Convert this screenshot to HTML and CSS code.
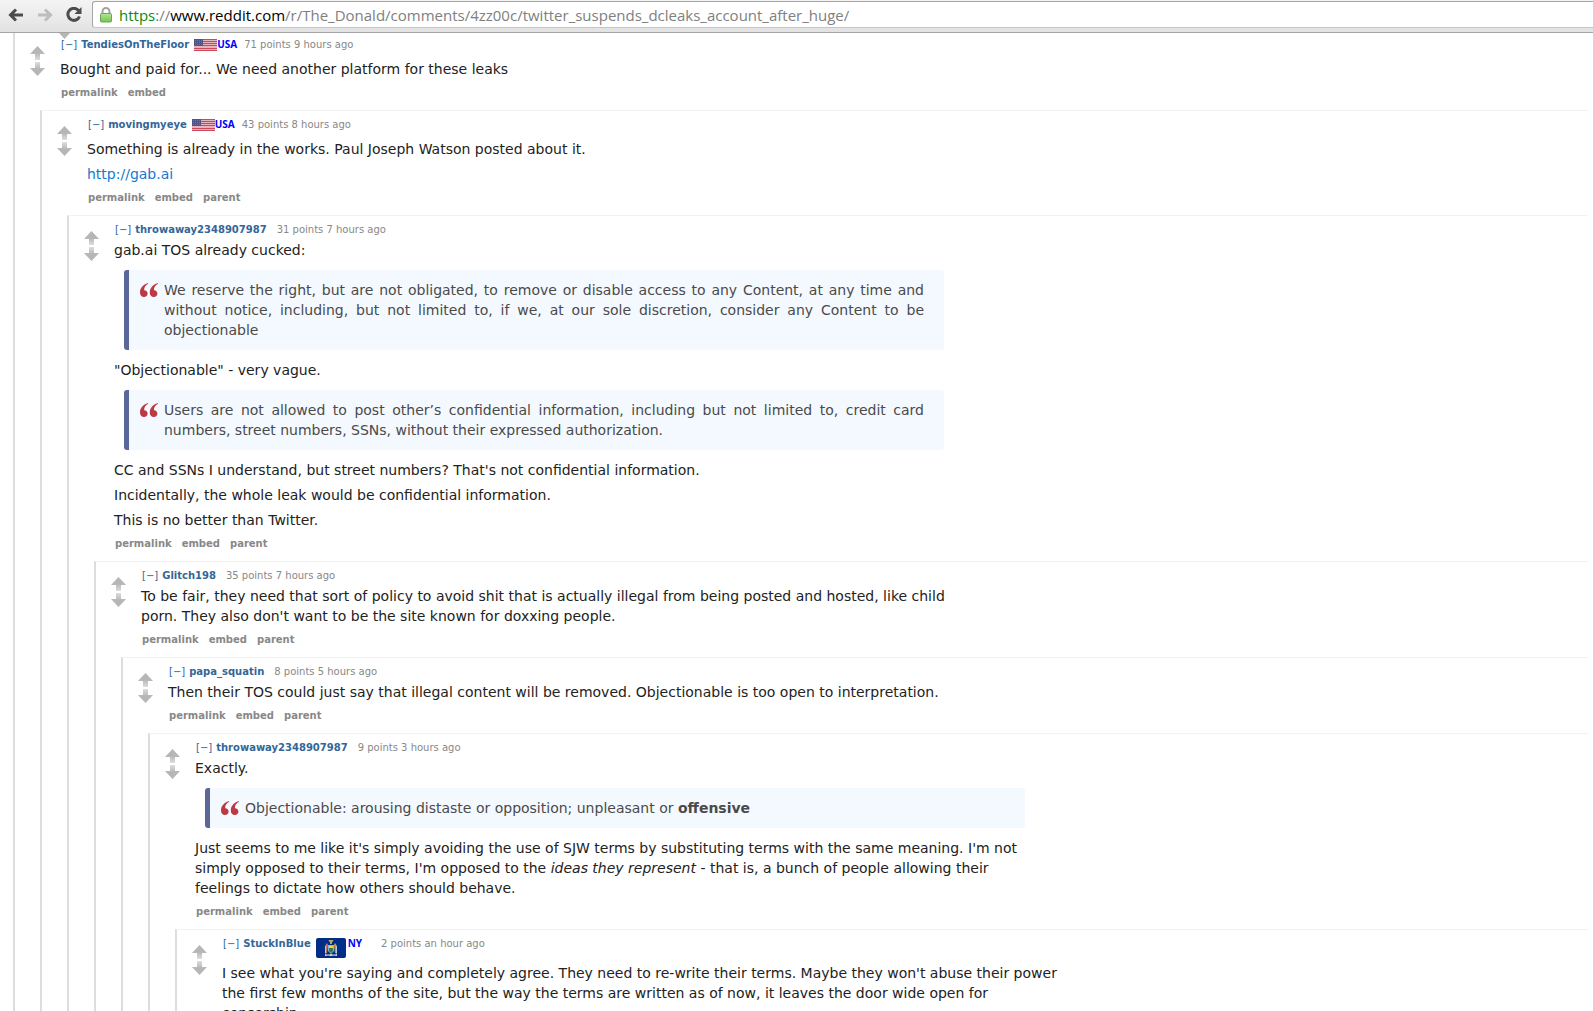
FILE: index.html
```html
<!DOCTYPE html>
<html lang="en">
<head>
<meta charset="utf-8">
<title>Twitter suspends DCLeaks account : The_Donald</title>
<link rel="stylesheet" href="styles.css">
</head>
<body>
<svg class="defs" aria-hidden="true">
  <defs>
    <linearGradient id="stem" x1="0" y1="0" x2="0" y2="1"><stop offset="0.5" stop-color="#b6b6b6"/><stop offset="1" stop-color="#dedede"/></linearGradient>
    <linearGradient id="lock" x1="0" y1="0" x2="0" y2="1"><stop offset="0" stop-color="#b4e594"/><stop offset="1" stop-color="#72c653"/></linearGradient>
    <symbol id="up" viewBox="0 0 15 14"><path d="M7.500 0L15 8H10V14H5V8H0Z" fill="url(#stem)"/></symbol>
    <symbol id="quote" viewBox="0 0 18 14"><path d="M8 0C3 1.500 0 5 0 9.500C0 12.300 1.600 14 4 14C6.200 14 7.600 12.500 7.600 10.500C7.600 8.500 6.200 7.200 4.200 7.200C3.900 4.500 5.500 2 8.200.7ZM17.800 0C12.800 1.500 9.800 5 9.800 9.500C9.800 12.300 11.400 14 13.800 14C16 14 17.400 12.500 17.400 10.500C17.400 8.500 16 7.200 14 7.200C13.700 4.500 15.300 2 18 .7Z" fill="#bc3a43"/></symbol>
    <symbol id="usa" viewBox="0 0 23 12"><path fill="#e6b4ba" d="M0 0h23v12H0z"/><path d="M0 .5h23M0 2.500h23M0 4.500h23M0 6.500h23M0 9.500h23M0 11.500h23" stroke="#c9485a"/><path fill="#50538a" d="M0 0h9v7H0z"/><path d="M1 1.500h8M1 3.500h8M1 5.500h8" stroke="#70739f" stroke-dasharray="1 1"/></symbol>
  </defs>
</svg>
<header class="toolbar">
  <button class="nav" aria-label="Back"><svg width="16" height="14" viewBox="0 0 16 14" fill="none" stroke="#4c4c4c" stroke-width="3"><path d="M15 7H3M8 1.500L2.500 7L8 12.500"/></svg></button>
  <button class="nav" aria-label="Forward"><svg width="16" height="14" viewBox="0 0 16 14" fill="none" stroke="#bdbdbd" stroke-width="3"><path d="M1 7H13M8 1.500L13.500 7L8 12.500"/></svg></button>
  <button class="nav" aria-label="Reload"><svg width="16" height="15" viewBox="0 0 16 15"><path d="M12.500 3.500A6 6 0 1 0 13.500 9.500" fill="none" stroke="#4c4c4c" stroke-width="3"/><path d="M15.500 0V7H8.500Z" fill="#4c4c4c"/></svg></button>
  <div class="omnibox">
    <svg width="12" height="16" viewBox="0 0 12 16"><path d="M2.500 8V4.500a3.500 3.500 0 0 1 7 0V8" fill="none" stroke="#a3a3a3" stroke-width="2"/><rect x=".5" y="6.500" width="11" height="8.500" rx="1" fill="url(#lock)" stroke="#6aa853"/></svg>
    <div class="url" role="textbox" aria-label="Address"><span class="scheme">https</span>://<span class="host">www.reddit.com</span>/r/The_Donald/comments/4zz00c/twitter_suspends_dcleaks_account_after_huge/</div>
  </div>
</header>
<main class="thread">
  <svg class="previous" width="11" height="6" viewBox="0 0 11 6" aria-hidden="true"><path d="M0 0H11L5.500 6Z" fill="#b6b6b6"/></svg>
  <article class="comment first">
    <div class="votes"><button aria-label="Upvote"><svg><use href="#up"/></svg></button><button class="down" aria-label="Downvote"><svg><use href="#up"/></svg></button></div>
    <div class="entry">
      <p class="tagline"><a href="#" class="fold">[−]</a><a href="#" class="author">TendiesOnTheFloor</a><span class="flair"><svg class="usa"><use href="#usa"/></svg>USA</span><span>71 points 9 hours ago</span></p>
      <div class="md"><p>Bought and paid for... We need another platform for these leaks</p></div>
      <nav class="actions"><a href="#">permalink</a><a href="#">embed</a></nav>
    </div>
    <article class="comment">
      <div class="votes"><button aria-label="Upvote"><svg><use href="#up"/></svg></button><button class="down" aria-label="Downvote"><svg><use href="#up"/></svg></button></div>
      <div class="entry">
        <p class="tagline"><a href="#" class="fold">[−]</a><a href="#" class="author">movingmyeye</a><span class="flair"><svg class="usa"><use href="#usa"/></svg>USA</span><span>43 points 8 hours ago</span></p>
        <div class="md"><p>Something is already in the works. Paul Joseph Watson posted about it.</p><p><a href="#">http://gab.ai</a></p></div>
        <nav class="actions"><a href="#">permalink</a><a href="#">embed</a><a href="#">parent</a></nav>
      </div>
      <article class="comment">
        <div class="votes"><button aria-label="Upvote"><svg><use href="#up"/></svg></button><button class="down" aria-label="Downvote"><svg><use href="#up"/></svg></button></div>
        <div class="entry">
          <p class="tagline"><a href="#" class="fold">[−]</a><a href="#" class="author">throwaway2348907987</a><span class="score">31 points 7 hours ago</span></p>
          <div class="md">
            <p>gab.ai TOS already cucked:</p>
            <blockquote><svg class="mark"><use href="#quote"/></svg><p>We reserve the right, but are not obligated, to remove or disable access to any Content, at any time and without notice, including, but not limited to, if we, at our sole discretion, consider any Content to be objectionable</p></blockquote>
            <p>"Objectionable" - very vague.</p>
            <blockquote><svg class="mark"><use href="#quote"/></svg><p>Users are not allowed to post other’s confidential information, including but not limited to, credit card numbers, street numbers, SSNs, without their expressed authorization.</p></blockquote>
            <p>CC and SSNs I understand, but street numbers? That's not confidential information.</p>
            <p>Incidentally, the whole leak would be confidential information.</p>
            <p>This is no better than Twitter.</p>
          </div>
          <nav class="actions"><a href="#">permalink</a><a href="#">embed</a><a href="#">parent</a></nav>
        </div>
        <article class="comment">
          <div class="votes"><button aria-label="Upvote"><svg><use href="#up"/></svg></button><button class="down" aria-label="Downvote"><svg><use href="#up"/></svg></button></div>
          <div class="entry">
            <p class="tagline"><a href="#" class="fold">[−]</a><a href="#" class="author">Glitch198</a><span class="score">35 points 7 hours ago</span></p>
            <div class="md"><p>To be fair, they need that sort of policy to avoid shit that is actually illegal from being posted and hosted, like child porn. They also don't want to be the site known for doxxing people.</p></div>
            <nav class="actions"><a href="#">permalink</a><a href="#">embed</a><a href="#">parent</a></nav>
          </div>
          <article class="comment">
            <div class="votes"><button aria-label="Upvote"><svg><use href="#up"/></svg></button><button class="down" aria-label="Downvote"><svg><use href="#up"/></svg></button></div>
            <div class="entry">
              <p class="tagline"><a href="#" class="fold">[−]</a><a href="#" class="author">papa_squatin</a><span class="score">8 points 5 hours ago</span></p>
              <div class="md"><p>Then their TOS could just say that illegal content will be removed. Objectionable is too open to interpretation.</p></div>
              <nav class="actions"><a href="#">permalink</a><a href="#">embed</a><a href="#">parent</a></nav>
            </div>
            <article class="comment">
              <div class="votes"><button aria-label="Upvote"><svg><use href="#up"/></svg></button><button class="down" aria-label="Downvote"><svg><use href="#up"/></svg></button></div>
              <div class="entry">
                <p class="tagline"><a href="#" class="fold">[−]</a><a href="#" class="author">throwaway2348907987</a><span class="score">9 points 3 hours ago</span></p>
                <div class="md">
                  <p>Exactly.</p>
                  <blockquote><svg class="mark"><use href="#quote"/></svg><p>Objectionable: arousing distaste or opposition; unpleasant or <strong>offensive</strong></p></blockquote>
                  <p>Just seems to me like it's simply avoiding the use of SJW terms by substituting terms with the same meaning. I'm not simply opposed to their terms, I'm opposed to the <em>ideas they represent</em> - that is, a bunch of people allowing their feelings to dictate how others should behave.</p>
                </div>
                <nav class="actions"><a href="#">permalink</a><a href="#">embed</a><a href="#">parent</a></nav>
              </div>
              <article class="comment">
                <div class="votes"><button aria-label="Upvote"><svg><use href="#up"/></svg></button><button class="down" aria-label="Downvote"><svg><use href="#up"/></svg></button></div>
                <div class="entry">
                  <p class="tagline"><a href="#" class="fold">[−]</a><a href="#" class="author">StuckInBlue</a><span class="flair state"><svg class="ny" viewBox="0 0 30 20"><rect width="30" height="20" rx="2" fill="#002d87"/><path d="M12.500 2h5l-1 2h-3z" fill="#c9a25a"/><circle cx="15" cy="5" r="1" fill="#e8c65a"/><path d="M11 5l1 2-1 8-2 1 .5-9z" fill="#c9705f"/><path d="M19 5l-1 2 1 8 2 1-.5-9z" fill="#d9913f"/><path d="M9 8h1v7H9zM20 8h1v7h-1z" fill="#b9c7de"/><path d="M12 7h6v6l-3 3-3-3z" fill="#7fb8cf"/><path d="M13 8h4v2h-4z" fill="#f2d13e"/><path d="M13 10h4v3l-2 2-2-2z" fill="#2f7d4b"/><path d="M9 16q3 1 6 0q3 1 6 0v2q-3-1-6 0q-3-1-6 0z" fill="#dcdcdc"/></svg>NY</span><span>2 points an hour ago</span></p>
                  <div class="md"><p>I see what you're saying and completely agree. They need to re-write their terms. Maybe they won't abuse their power the first few months of the site, but the way the terms are written as of now, it leaves the door wide open for censorship.</p></div>
                  <nav class="actions"><a href="#">permalink</a><a href="#">embed</a><a href="#">parent</a></nav>
                </div>
              </article>
            </article>
          </article>
        </article>
      </article>
    </article>
  </article>
</main>
</body>
</html>
```
FILE: styles.css
```css
* { box-sizing: border-box; }
body {
  display: flex;
  flex-direction: column;
  height: 100vh;
  margin: 0;
  overflow: hidden;
  background: #fff;
  color: #222;
  font-family: Verdana, "DejaVu Sans", sans-serif;
  font-size: 14px;
  line-height: 20px;
}
p { margin: 0; }
a { color: #369; text-decoration: none; }
button { display: block; margin: 0; padding: 0; border: 0; background: none; }
svg { display: block; flex: none; }
.defs { position: absolute; width: 0; height: 0; }

.toolbar {
  display: flex;
  flex: none;
  gap: 13px;
  height: 33px;
  padding: 1px 0 4px 8px;
  border-bottom: 1px solid #a5a5a5;
  background: linear-gradient(#f4f4f4, #e2e2e2);
}
.nav { width: 16px; }
.omnibox {
  display: flex;
  flex: 1;
  align-items: center;
  gap: 7px;
  margin-left: -3px;
  padding-left: 7px;
  border: 1px solid #a5a5a5;
  border-right: 0;
  border-bottom-color: #c6c6c6;
  border-radius: 3px 0 0 3px;
  background: #fff;
}
.url {
  color: #808080;
  font-family: "Segoe UI", "Open Sans", sans-serif;
  font-size: 15px;
  white-space: nowrap;
}
.scheme { color: #0a8a0a; }
.host { color: #000; }

.thread {
  position: relative;
  flex: 1;
  min-height: 0;
  overflow: hidden;
  padding: 0 5px 0 13px;
}
.previous { position: absolute; left: 59px; top: 0; }
.comment {
  display: grid;
  grid-template-columns: 45px minmax(0, 1fr);
  border-top: 1px solid #f2f2f2;
  border-left: 2px solid #ddd;
}
.comment > .comment { grid-column: 1 / -1; margin-left: 25px; }
.first { margin-top: -3px; }
.votes {
  display: flex;
  flex-direction: column;
  gap: 2px;
  padding: 15px 0 0 15px;
}
.votes svg { width: 15px; height: 14px; }
.down { transform: rotate(180deg); width: 15px; }
.entry { padding: 5px 0 9px; }
.tagline {
  display: flex;
  margin-bottom: 2px;
  padding-left: 1px;
  color: #888;
  font-size: 10px;
  line-height: 17px;
}
.author { margin-left: 4px; font-weight: bold; }
.score { margin-left: 10px; }
.flair {
  display: flex;
  margin: 0 7px 0 5px;
  color: #00f;
  font-family: "Noto Sans", sans-serif;
  font-weight: bold;
}
.usa { width: 23px; height: 12px; margin: 3px 0 6px; }
.ny { width: 30px; height: 20px; margin: 3px 2px 3px 0; }
.state { margin-right: 19px; }

.md { max-width: 840px; }
.md p + p { margin-top: 5px; }
.md a { color: #1479d0; }
blockquote {
  display: flex;
  gap: 6px;
  margin: 10px;
  padding: 10px 20px 10px 11px;
  border-left: 5px solid #5a6799;
  border-radius: 3px;
  background: #f4f9ff;
  color: #4a4a4a;
  text-align: justify;
}
.mark { width: 18px; height: 14px; margin-top: 3px; }
.actions {
  display: flex;
  gap: 10px;
  margin-top: 5px;
  padding-left: 1px;
  font-size: 10px;
  font-weight: bold;
  line-height: 17px;
}
.actions a { color: #888; }
```
